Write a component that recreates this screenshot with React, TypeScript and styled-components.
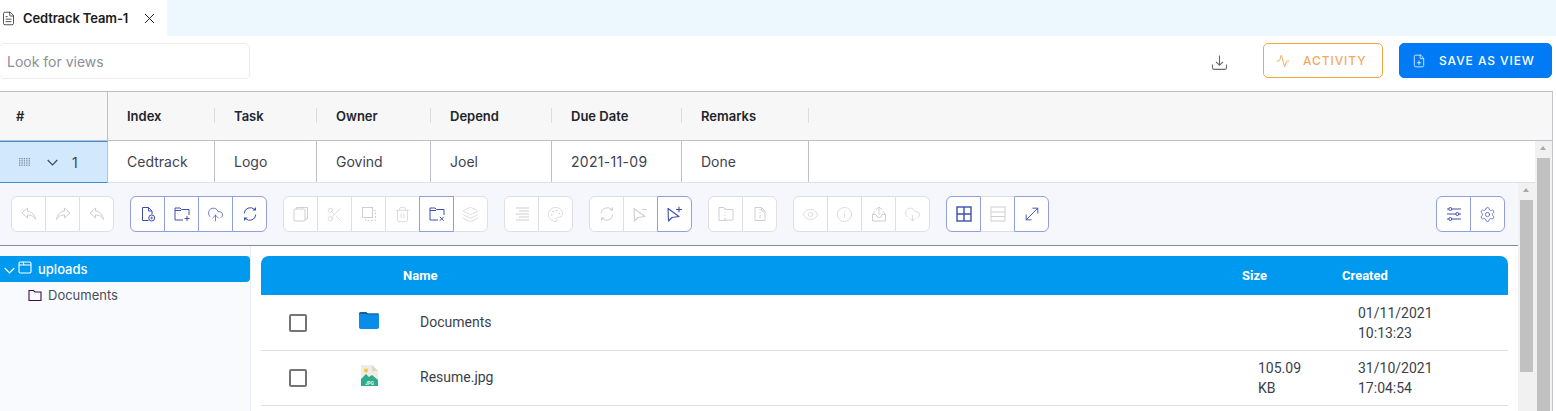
import React from 'react';
import styled, { createGlobalStyle } from 'styled-components';
import {
  Activity, CloudDownload, CloudUpload, Eye, FilePlus, FileText,
  Info, Layers, MoveDiagonal, Palette, Scissors, Settings, Trash2, X,
} from 'lucide-react';

const Global = createGlobalStyle`
  html, body { margin: 0; padding: 0; background: #fff; }
  body { font-family: Inter, "Liberation Sans", sans-serif; }
  * { box-sizing: border-box; }
`;

const Page = styled.div`
  width: 1556px; height: 411px; overflow: hidden; display: flex; flex-direction: column; background: #fff;
`;
const TabStrip = styled.div`
  height: 36px; flex: none; background: #ecf8fe; display: flex;
`;
const Tab = styled.div`
  width: 167px; background: #fff; display: flex; align-items: center; padding-left: 1px; color: #1b1b22;
  font-size: 13px; font-weight: 600; letter-spacing: -0.12px;
  & > span { margin-left: 7px; width: 118px; white-space: nowrap; }
`;
const Toolbar = styled.div`
  height: 55px; flex: none; display: flex; align-items: flex-start; padding: 7px 4px 0 0;
`;
const Search = styled.input`
  width: 251px; height: 36px; margin-left: -1px; border: 1px solid #ededed; border-radius: 5px; padding: 0 7px;
  font: 400 14px Inter, sans-serif; outline: none; background: #fff;
  &::placeholder { color: #8b8f96; opacity: 1; }
`;
const IconSlot = styled.div`
  margin-left: auto; margin-right: 35px; width: 17px; height: 36px; display: flex; align-items: center; color: #6a6a6a;
  padding-top: 2px;
`;
const ActionButton = styled.button<{ $primary?: boolean; $w: number }>`
  width: ${p => p.$w}px; height: 35px; border-radius: 5px; display: flex; align-items: center; padding: 0 0 0 12px;
  border: 1px solid ${p => (p.$primary ? '#007bf5' : '#f5a53f')};
  background: ${p => (p.$primary ? '#007bf5' : '#fff')};
  color: ${p => (p.$primary ? '#fff' : '#f6a860')};
  font: 500 12px Inter, sans-serif; letter-spacing: 0.92px; white-space: nowrap;
  margin-left: ${p => (p.$primary ? 16 : 0)}px;
  & > svg { flex: none; margin-right: 13px; }
`;
const Grid = styled.div`
  flex: 1; min-height: 0; width: 1553px; border-right: 1px solid #c3c3cc; border-top: 1px solid #bfbfc8;
  display: flex; flex-direction: column;
`;
const HeadRow = styled.div`
  height: 49px; flex: none; background: #f7f7f8; border-bottom: 1px solid #bfbfc8; display: flex;
`;
const HashCell = styled.div`
  width: 108px; border-right: 1px solid #bfbfc8; padding-left: 16px; display: flex; align-items: center;
  font-size: 13px; font-weight: 600; color: #22252b;
`;
const HeadCell = styled.div<{ $w: number }>`
  width: ${p => p.$w}px; padding-left: 19px; display: flex; align-items: center; position: relative;
  font-size: 13px; font-weight: 600; color: #22252b;
  &::after { content: ''; position: absolute; right: 0; top: 16px; height: 15px; width: 1px; background: #dcdce0; }
`;
const ScrollArea = styled.div`
  flex: 1; min-height: 0; display: flex;
`;
const ScrollContent = styled.div`
  flex: 1; min-width: 0; display: flex; flex-direction: column;
`;
const DataRow = styled.div`
  height: 42px; flex: none; display: flex; border-bottom: 1px solid #e0e0e6; background: #fff;
`;
const IndexCell = styled.div`
  width: 108px; background: #d1e8fd; border-right: 1px solid #bfbfc8; border-bottom: 1px solid #3a8fd8;
  border-top: 1px solid #3a8fd8; margin-bottom: -1px; display: flex; align-items: center; color: #3a3f55; font-size: 14px;
  padding-left: 19px;
  & > svg:nth-child(2) { margin-left: 16px; color: #3c4658; }
  & > span { margin-left: 14px; }
`;
const Cell = styled.div<{ $w: number; $spaced?: boolean }>`
  width: ${p => p.$w}px; padding-left: 19px; border-right: 1px solid #bfbfc8; display: flex; align-items: center;
  font-size: 14px; color: #3f4350; letter-spacing: ${p => (p.$spaced ? '0.3px' : '0')};
`;
const Panel = styled.div`
  flex: 1; min-height: 0; display: flex; background: #f5f7fc;
`;
const PanelMain = styled.div`
  flex: 1; min-width: 0; display: flex; flex-direction: column;
`;
const IconBar = styled.div`
  height: 63px; flex: none; display: flex; align-items: center; gap: 16px; padding: 0 13px 0 11px;
  border-bottom: 1px solid #828ba6;
`;
const Group = styled.div<{ $right?: boolean }>`
  display: flex; padding-left: 1px; ${p => (p.$right ? 'margin-left: auto;' : '')}
`;
const ToolBtn = styled.button<{ $on?: boolean }>`
  width: 35px; height: 36px; margin-left: -1px; padding: 0; display: flex; align-items: center; justify-content: center;
  background: #fff; border: 1px solid ${p => (p.$on ? '#919fdd' : '#dfdfe2')}; color: ${p => (p.$on ? '#3d4fb0' : '#cfcfd0')};
  position: relative; z-index: ${p => (p.$on ? 1 : 0)};
  &:first-child { border-radius: 6px 0 0 6px; }
  &:last-child { border-radius: 0 6px 6px 0; }
`;
const Body = styled.div`
  flex: 1; min-height: 0; display: flex; background: #fff;
`;
const Side = styled.div`
  width: 251px; flex: none; background: #f9fafd; border-right: 1px solid #e8ecf8; padding-top: 10px;
`;
const Selected = styled.div`
  height: 26px; background: #0099f0; border-radius: 0 4px 4px 0; display: flex; align-items: center; color: #fff;
  padding-left: 4px; font-size: 13px; font-weight: 500;
  & > span { margin-left: 6px; }
  & > svg:nth-child(1) { margin-top: 3px; }
  & > svg:nth-child(2) { margin-left: 3px; margin-top: -3px; }
`;
const TreeItem = styled.div`
  height: 26px; display: flex; align-items: center; padding-left: 28px; font-size: 13px; color: #4a4d55;
  & > svg { color: #3b1145; }
  & > span { margin-left: 6px; }
`;
const Files = styled.div`
  flex: 1; min-width: 0; padding: 10px 10px 0 10px;
`;
const FileHead = styled.div`
  height: 39px; margin-bottom: 1px; background: #0099f0; border-radius: 8px 8px 0 0; display: grid;
  grid-template-columns: 142px 839px 100px 1fr; align-items: center; color: #fff;
  font: 700 13px Roboto, sans-serif;
  & > span:first-child { grid-column: 2; }
`;
const FileRow = styled.div`
  height: 55px; border-bottom: 1px solid #e0e0e0; display: grid;
  grid-template-columns: 74px 68px 839px 100px 1fr; align-items: center;
  font: 400 14px/20px Roboto, sans-serif; color: #3b3f4a;
`;
const Check = styled.div`
  width: 18px; height: 18px; border: 2px solid #757575; border-radius: 2px; justify-self: center; margin-top: -1px;
`;
const Thumbnail = styled.div`
  justify-self: center; display: flex; margin-top: -5px;
`;
const NameCell = styled.div`
  padding-left: 17px; margin-top: -3px;
`;
const Wrapped = styled.div<{ $w: number }>`
  padding-left: 16px; width: ${p => p.$w}px;
`;
const Track = styled.div<{ $thumbTop: number; $thumbH: number }>`
  width: 17px; flex: none; background: #f1f1f1; position: relative;
  &::before {
    content: ''; position: absolute; left: 5px; top: ${p => p.$thumbTop - 12}px; border: 3.5px solid transparent;
    border-bottom: 4px solid #a8a8a8; border-top: 0; width: 0; height: 0;
  }
  &::after {
    content: ''; position: absolute; left: 2px; top: ${p => p.$thumbTop}px; width: 13px; height: ${p => p.$thumbH}px; background: #c1c1c1;
  }
`;

const Svg = ({ children }: { children: React.ReactNode }) => (
  <svg width="16" height="16" viewBox="0 0 16 16" fill="none" stroke="currentColor" strokeWidth="1">{children}</svg>
);
const Chevron = () => (
  <svg width="11" height="7" viewBox="0 0 11 7" fill="none" stroke="currentColor" strokeWidth="1.200">
    <path d="M.7 1 5.500 5.800 10.300 1" />
  </svg>
);
const Reply = ({ flip }: { flip?: boolean }) => (
  <svg width="16" height="16" viewBox="0 0 16 16" fill="none" stroke="currentColor" strokeWidth="1" style={flip ? { transform: 'scaleX(-1)' } : undefined}>
    <path d="M6.500 2 1 7l5.500 5V9c3.500 0 6 1 8 4.500C14 9 11 5.500 6.500 5.200Z" strokeLinejoin="round" />
  </svg>
);
const NewFile = () => (
  <Svg>
    <path d="M8.500 14.500H2.500v-13h6l3.500 3.500v3.500M8.500 1.500V5H12" />
    <circle cx="11.700" cy="12" r="3" />
    <path d="M10.300 12h2.800M11.700 10.600v2.800" strokeWidth=".8" />
  </Svg>
);
const TabFolder = ({ mark }: { mark?: 'plus' | 'x' }) => (
  <Svg>
    <path d="M9 14H1V2h5l1.500 1.500H15V9" />
    <path d="M1 4.500h6" />
    {mark === 'plus' && <path d="M10.500 12.500h5M13 10v5" />}
    {mark === 'x' && <path d="M10.800 10.800l4 4M14.800 10.800l-4 4" />}
  </Svg>
);
const Refresh = () => (
  <Svg>
    <path d="M2.200 7.500A6 6 0 0 1 12.500 3.500M13.800 8.500A6 6 0 0 1 3.500 12.500" />
    <path d="M10.500 4.500h3.500V1ZM5.500 11.500H2V15Z" fill="currentColor" stroke="none" />
  </Svg>
);
const CopyBoxes = () => (
  <Svg>
    <rect x="1" y="3" width="11" height="12" rx="1" />
    <path d="M3.500 3V1.500h11V13H12" />
  </Svg>
);
const PasteBox = () => (
  <Svg>
    <rect x="1.500" y="1.500" width="10" height="10" />
    <path d="M13 4.500h1.500v10h-10V13" strokeDasharray="2 1.500" />
  </Svg>
);
const LinesIcon = () => (
  <Svg><path d="M2 2h13M5 5h10M2 8h13M5 11h10M2 14h13" /></Svg>
);
const Pointer = ({ sign }: { sign: 'plus' | 'minus' }) => (
  <svg width="17" height="17" viewBox="0 0 17 17" fill="none" stroke="currentColor" strokeWidth="1.100">
    <path d="M2 2.500 2.500 15l3.500-3.500 7-1Z" strokeLinejoin="round" />
    <path d={sign === 'plus' ? 'M10 3.500h6M13 .8v5.400' : 'M10 3.500h5'} />
  </svg>
);
const ZipFolder = () => (
  <Svg>
    <path d="M1 14.500v-13h5l1.500 2H15v10.500Z" />
    <path d="M7 2v2M7 6v1M7 9v1M7 12v2.500" />
  </Svg>
);
const ZipFile = () => (
  <Svg>
    <path d="M3 14.500v-13h6.500L13 5v9.500ZM9.500 1.500V5H13" />
    <path d="M8 3v1M8 6v1M8 9v3" />
  </Svg>
);
const TrayUp = () => (
  <Svg>
    <path d="M8 1v8M5 3.500 8 1l3 2.500" />
    <path d="M1.500 8.500 4 5.500M14.500 8.500 12 5.500M1.500 8.500V15h13V8.500H11a3 3 0 0 1-6 0Z" />
  </Svg>
);
const GridBox = () => (
  <svg width="16" height="16" viewBox="0 0 16 16" fill="none" stroke="currentColor" strokeWidth="1.400">
    <rect x="1" y="1" width="14" height="14" />
    <path d="M8 1v14M1 8h14" />
  </svg>
);
const RowsBox = () => (
  <Svg>
    <rect x="1" y="1" width="14" height="14" />
    <path d="M1 6h14M1 10.500h14" />
  </Svg>
);
const Sliders = () => (
  <Svg>
    <path d="M5.800 3H15M1 3h1.800M1 8h8.800M12.800 8H15M5.800 13H15M1 13h1.800" />
    <circle cx="4.300" cy="3" r="1.500" />
    <circle cx="11.300" cy="8" r="1.500" />
    <circle cx="4.300" cy="13" r="1.500" />
  </Svg>
);
const TreeFolder = () => (
  <svg width="14" height="13" viewBox="0 0 14 13" fill="none" stroke="currentColor" strokeWidth="1.100">
    <path d="M1 11.500V1.500h4.500L7 3h6v8.500Z" />
  </svg>
);
const OpenTreeFolder = () => (
  <svg width="14" height="13" viewBox="0 0 14 13" fill="none" stroke="currentColor" strokeWidth="1.100">
    <rect x="1" y="1" width="12" height="11" rx="1.500" />
    <path d="M1 4h12M5 1l1 3" />
  </svg>
);
const TrayDownload = () => (
  <svg width="17" height="17" viewBox="0 0 17 17" fill="none" stroke="currentColor" strokeWidth="1.100">
    <path d="M8.500 1.500v9.500M5 7.800l3.500 3.400 3.500-3.400" />
    <path d="M1.500 10.500v3.300c0 1 .6 1.600 1.600 1.600h10.800c1 0 1.600-.6 1.600-1.600v-3.300" />
  </svg>
);
const Grip = () => (
  <svg width="12" height="8" viewBox="0 0 12 8" fill="#7b8ba6">
    {[0, 1, 2, 3].flatMap(r => [0, 1, 2, 3, 4].map(c => <rect key={`${r}-${c}`} x={c * 2.400} y={r * 2.200} width="1.300" height="1.300" />))}
  </svg>
);
const BlueFolder = () => (
  <svg width="20" height="17" viewBox="0 0 20 17">
    <path d="M0 2C0 .8.800 0 2 0h5l2 1.500h9c1.200 0 2 .8 2 2V15c0 1.200-.8 2-2 2H2c-1.200 0-2-.8-2-2Z" fill="#0a8de8" />
    <path d="M0 3C0 .8.800 0 2 0h5l2 1.500h11V2.500H8.500L7 2H1Z" fill="#14608f" />
  </svg>
);
const JpgFile = () => (
  <svg width="17" height="21" viewBox="0 0 17 21">
    <path d="M0 0h11l6 6v15H0Z" fill="#efece3" />
    <path d="M11 0l6 6h-6Z" fill="#dcd8cc" />
    <circle cx="5" cy="5.500" r="2" fill="#f4c542" />
    <path d="M0 14l5-5 3 3 3-2 6 5v6H0Z" fill="#2faa8c" />
    <text x="8.500" y="19.500" textAnchor="middle" fontSize="4.500" fontFamily="Roboto, sans-serif" fontWeight="700" fill="#e8f7f1">JPG</text>
  </svg>
);

const s = { size: 17, strokeWidth: 1 };
type Tool = { on?: boolean; icon: React.ReactNode };
const toolGroups: Tool[][] = [
  [{ icon: <Reply /> }, { icon: <Reply flip /> }, { icon: <Reply /> }],
  [
    { on: true, icon: <NewFile /> }, { on: true, icon: <TabFolder mark="plus" /> },
    { on: true, icon: <CloudUpload {...s} /> }, { on: true, icon: <Refresh /> },
  ],
  [
    { icon: <CopyBoxes /> }, { icon: <Scissors {...s} /> }, { icon: <PasteBox /> }, { icon: <Trash2 {...s} /> },
    { on: true, icon: <TabFolder mark="x" /> }, { icon: <Layers {...s} /> },
  ],
  [{ icon: <LinesIcon /> }, { icon: <Palette {...s} /> }],
  [{ icon: <Refresh /> }, { icon: <Pointer sign="minus" /> }, { on: true, icon: <Pointer sign="plus" /> }],
  [{ icon: <ZipFolder /> }, { icon: <ZipFile /> }],
  [{ icon: <Eye {...s} /> }, { icon: <Info {...s} /> }, { icon: <TrayUp /> }, { icon: <CloudDownload {...s} /> }],
  [{ on: true, icon: <GridBox /> }, { icon: <RowsBox /> }, { on: true, icon: <MoveDiagonal size={20} strokeWidth={1.1} /> }],
];
const rightTools: Tool[] = [
  { on: true, icon: <Sliders /> }, { on: true, icon: <Settings {...s} /> },
];
const columns = [
  { name: 'Index', value: 'Cedtrack', w: 107 },
  { name: 'Task', value: 'Logo', w: 102 },
  { name: 'Owner', value: 'Govind', w: 114 },
  { name: 'Depend', value: 'Joel', w: 121 },
  { name: 'Due Date', value: '2021-11-09', w: 130, spaced: true },
  { name: 'Remarks', value: 'Done', w: 127 },
];
const files = [
  { name: 'Documents', size: '', created: '01/11/2021 10:13:23', icon: <BlueFolder /> },
  { name: 'Resume.jpg', size: '105.09 KB', created: '31/10/2021 17:04:54', icon: <JpgFile /> },
];

export default function App() {
  return (
    <Page>
      <Global />
      <TabStrip>
        <Tab>
          <FileText size={15} strokeWidth={1.2} />
          <span>Cedtrack Team-1</span>
          <X size={17} strokeWidth={1.4} />
        </Tab>
      </TabStrip>
      <Toolbar>
        <Search placeholder="Look for views" />
        <IconSlot><TrayDownload /></IconSlot>
        <ActionButton $w={120}><Activity size={14} strokeWidth={1.6} />ACTIVITY</ActionButton>
        <ActionButton $primary $w={153}><FilePlus size={14} strokeWidth={1.3} />SAVE AS VIEW</ActionButton>
      </Toolbar>
      <Grid>
        <HeadRow>
          <HashCell>#</HashCell>
          {columns.map(c => <HeadCell key={c.name} $w={c.w}>{c.name}</HeadCell>)}
        </HeadRow>
        <ScrollArea>
          <ScrollContent>
            <DataRow>
              <IndexCell>
                <Grip />
                <Chevron />
                <span>1</span>
              </IndexCell>
              {columns.map(c => <Cell key={c.name} $w={c.w} $spaced={c.spaced}>{c.value}</Cell>)}
            </DataRow>
            <Panel>
              <PanelMain>
                <IconBar>
                  {toolGroups.map((g, i) => (
                    <Group key={i}>
                      {g.map((t, j) => <ToolBtn key={j} $on={t.on}>{t.icon}</ToolBtn>)}
                    </Group>
                  ))}
                  <Group $right>
                    {rightTools.map((t, j) => <ToolBtn key={j} $on={t.on}>{t.icon}</ToolBtn>)}
                  </Group>
                </IconBar>
                <Body>
                  <Side>
                    <Selected>
                      <Chevron />
                      <OpenTreeFolder />
                      <span>uploads</span>
                    </Selected>
                    <TreeItem>
                      <TreeFolder />
                      <span>Documents</span>
                    </TreeItem>
                  </Side>
                  <Files>
                    <FileHead><span>Name</span><span>Size</span><span>Created</span></FileHead>
                    {files.map(f => (
                      <FileRow key={f.name}>
                        <Check />
                        <Thumbnail>{f.icon}</Thumbnail>
                        <NameCell>{f.name}</NameCell>
                        <Wrapped $w={70}>{f.size}</Wrapped>
                        <Wrapped $w={100}>{f.created}</Wrapped>
                      </FileRow>
                    ))}
                  </Files>
                </Body>
              </PanelMain>
              <Track $thumbTop={17} $thumbH={172} />
            </Panel>
          </ScrollContent>
          <Track $thumbTop={17} $thumbH={260} />
        </ScrollArea>
      </Grid>
    </Page>
  );
}
